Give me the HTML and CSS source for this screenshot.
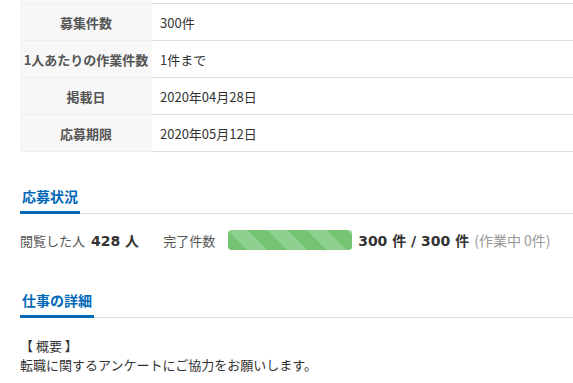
FILE: index.html
```html
<!DOCTYPE html>
<html lang="ja">
<head>
    <meta charset="UTF-8">
    <title>案件詳細</title>
    <link rel="stylesheet" href="styles.css">
</head>
<body>

<div class="page">
    <table class="info-table">
        <tr class="cut-row">
            <th></th>
            <td></td>
        </tr>
        <tr>
            <th>募集件数</th>
            <td>300件</td>
        </tr>
        <tr>
            <th>1人あたりの作業件数</th>
            <td>1件まで</td>
        </tr>
        <tr>
            <th>掲載日</th>
            <td>2020年04月28日</td>
        </tr>
        <tr>
            <th>応募期限</th>
            <td>2020年05月12日</td>
        </tr>
    </table>

    <div class="section">
        <h2 class="section-title"><span>応募状況</span></h2>
        <div class="status">
            <span class="status-label">閲覧した人</span>
            <span class="status-num">428 人</span>
            <span class="status-label done-label">完了件数</span>
            <div class="progress"><div class="progress-bar" style="width: 100%;"></div></div>
            <span class="status-num">300 件 / 300 件</span>
            <span class="status-sub">(作業中 0件)</span>
        </div>
    </div>

    <div class="section">
        <h2 class="section-title"><span>仕事の詳細</span></h2>
        <div class="detail">
            <p>【 概要 】</p>
            <p>転職に関するアンケートにご協力をお願いします。</p>
        </div>
    </div>
</div>

</body>
</html>
```

FILE: styles.css
```css
body {
    margin: 0;
    font-family: "Noto Sans CJK JP", "Noto Sans", sans-serif;
    font-size: 13px;
    color: #333;
    background-color: #FFFFFF;
    overflow: hidden;
}
.page {
    width: 620px;
    padding-left: 20px;
}
.info-table {
    width: 100%;
    border-collapse: collapse;
    margin-top: -33px;
}
.info-table th, .info-table td {
    height: 36px;
    padding: 0;
    border-bottom: 1px solid #DDDDDD;
}
.info-table th {
    width: 132px;
    background-color: #F7F7F7;
    border-bottom-color: #EEEEEE;
    color: #555;
    font-weight: 700;
    text-align: center;
}
.info-table td {
    padding-left: 8px;
}
.section {
    margin-top: 34px;
}
.section-title {
    margin: 0;
    font-size: 14px;
    font-weight: 700;
    color: #0068B7;
    border-bottom: 1px solid #DDDDDD;
    line-height: 20px;
}
.section-title span {
    display: inline-block;
    padding: 0 2px 5px 2px;
    border-bottom: 3px solid #0068B7;
    margin-bottom: -1px;
}
.status {
    display: flex;
    align-items: center;
    margin-top: 16px;
    height: 20px;
}
.status-label {
    color: #555;
}
.status-num {
    margin-left: 6px;
    font-family: "DejaVu Sans", "Noto Sans CJK JP", sans-serif;
    font-size: 14px;
    font-weight: 700;
    color: #333;
}
.done-label {
    margin-left: 24px;
}
.progress {
    width: 124px;
    height: 20px;
    margin-left: 13px;
    border-radius: 3px;
    background-color: #EEEEEE;
    overflow: hidden;
}
.progress-bar {
    height: 100%;
    border-radius: 3px;
    background-color: #74C473;
    background-image: repeating-linear-gradient(45deg, #74C473 0, #74C473 14px, #8ED08D 14px, #8ED08D 28px);
}
.status-sub {
    margin-left: 5px;
    font-size: 14px;
    color: #999;
}
.section + .section {
    margin-top: 40px;
}
.detail {
    margin-top: 18px;
}
.detail p {
    margin: 0;
    line-height: 19px;
}
```
